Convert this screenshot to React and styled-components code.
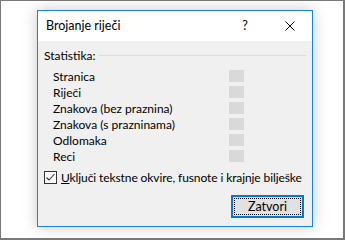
import { createGlobalStyle, styled } from "styled-components";

const Global = createGlobalStyle`
  body {
    margin: 0;
    background: #fff;
    font-family: Lato, "Noto Sans", "Liberation Sans", sans-serif;
    font-size: 12px;
    color: #000;
  }
`;

const Frame = styled.div`
  width: 345px;
  height: 240px;
  box-sizing: border-box;
  border: 1px solid #7a7a7a;
  border-right-width: 2px;
  border-bottom-width: 2px;
  background: #fff;
  padding: 9px 0 0 36px;
`;

const Dialog = styled.div`
  width: 276px;
  height: 217px;
  box-sizing: border-box;
  border: 1px solid #1883d7;
  background: #f0f0f0;
  box-shadow: 0 0 14px rgba(0, 0, 0, 0.22);
  display: flex;
  flex-direction: column;
`;

const TitleBar = styled.div`
  height: 30px;
  background: #fff;
  display: flex;
  align-items: center;
  padding-left: 8px;
  font-size: 12.5px;
`;

const Title = styled.div`
  flex: 1;
  line-height: 16px;
`;

const TitleButton = styled.div`
  width: ${(p) => p.$w}px;
  display: flex;
  justify-content: center;
  align-items: center;
  line-height: 16px;
`;

const Body = styled.div`
  flex: 1;
  padding: 6px 6px 8px 6px;
  display: flex;
  flex-direction: column;
`;

const GroupHeader = styled.div`
  display: flex;
  align-items: center;
  height: 16px;
  &::after {
    content: "";
    flex: 1;
    height: 1px;
    background: #dcdcdc;
    margin-left: 4px;
  }
`;

const StatList = styled.div`
  margin-top: 5px;
  padding-left: 9px;
  display: flex;
  flex-direction: column;
`;

const StatRow = styled.div`
  display: grid;
  grid-template-columns: 176px 15px;
  align-items: center;
  height: 16px;
  white-space: nowrap;
`;

const ValueBox = styled.div`
  width: 15px;
  height: 12px;
  background: #d9d9d9;
`;

const CheckRow = styled.label`
  margin-top: 5px;
  display: flex;
  align-items: center;
  height: 16px;
  gap: 4px;
  white-space: nowrap;
  letter-spacing: -0.1px;
`;

const Box = styled.span`
  flex: none;
  width: 13px;
  height: 13px;
  box-sizing: border-box;
  border: 1px solid #333;
  background: #fff;
  display: flex;
  align-items: center;
  justify-content: center;
`;

const Footer = styled.div`
  margin-top: auto;
  display: flex;
  justify-content: flex-end;
  padding-right: 2px;
`;

const Button = styled.button`
  width: 73px;
  height: 23px;
  box-sizing: border-box;
  border: 2px solid #0078d7;
  background: #e1e1e1;
  padding: 1px;
  font: inherit;
  font-size: 12.5px;
  color: #000;
`;

const Focus = styled.span`
  display: flex;
  height: 100%;
  box-sizing: border-box;
  border: 1px dotted #000;
  align-items: center;
  justify-content: center;
`;

const stats = [
  "Stranica",
  "Riječi",
  "Znakova (bez praznina)",
  "Znakova (s prazninama)",
  "Odlomaka",
  "Reci",
];

export default function App() {
  return (
    <>
      <Global />
      <Frame>
        <Dialog>
          <TitleBar>
            <Title>Brojanje riječi</Title>
            <TitleButton $w={46}>?</TitleButton>
            <TitleButton $w={44}>
              <svg width="10" height="10" viewBox="0 0 10 10">
                <path d="M0.5 0.5 L9.5 9.5 M9.5 0.5 L0.5 9.5" stroke="#000" strokeWidth="1" />
              </svg>
            </TitleButton>
          </TitleBar>
          <Body>
            <GroupHeader>Statistika:</GroupHeader>
            <StatList>
              {stats.map((s) => (
                <StatRow key={s}>
                  <span>{s}</span>
                  <ValueBox />
                </StatRow>
              ))}
            </StatList>
            <CheckRow>
              <Box>
                <svg width="11" height="11" viewBox="0 0 11 11">
                  <path d="M1.5 5.5 L4 8 L9.5 2" stroke="#333" strokeWidth="1.1" fill="none" />
                </svg>
              </Box>
              <span>
                <u>U</u>ključi tekstne okvire, fusnote i krajnje bilješke
              </span>
            </CheckRow>
            <Footer>
              <Button>
                <Focus>Zatvori</Focus>
              </Button>
            </Footer>
          </Body>
        </Dialog>
      </Frame>
    </>
  );
}
